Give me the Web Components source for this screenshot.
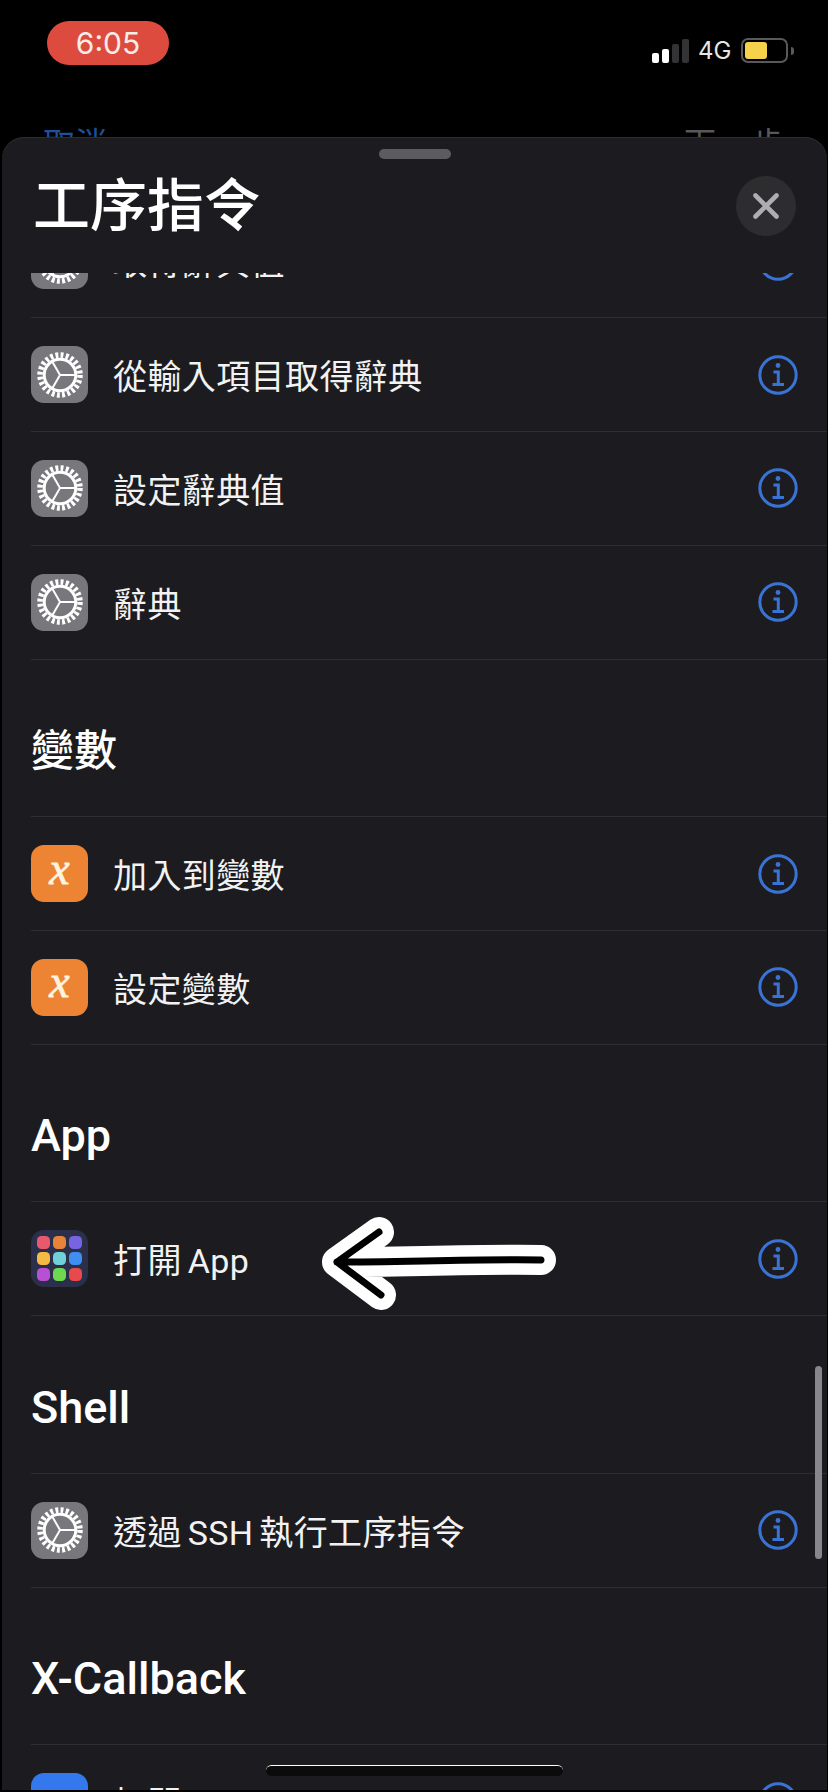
<!DOCTYPE html>
<html lang="zh-Hant">
<head>
<meta charset="utf-8">
<title>工序指令</title>
<style>
    html, body {
        margin: 0;
        height: 1792px;
        overflow: hidden;
        background: #000;
    }
    body {
        font-family: Inter, "Noto Sans CJK TC", sans-serif;
        color: #fff;
    }
</style>
</head>
<body>
<phone-screen>
    <status-bar time="6:05"></status-bar>
    <nav-behind></nav-behind>
    <action-sheet heading="工序指令">
        <action-row icon="gear">取得辭典值</action-row>
        <action-row icon="gear">從輸入項目取得辭典</action-row>
        <action-row icon="gear">設定辭典值</action-row>
        <action-row icon="gear">辭典</action-row>
        <section-title size="43">變數</section-title>
        <action-row icon="variable">加入到變數</action-row>
        <action-row icon="variable">設定變數</action-row>
        <section-title>App</section-title>
        <action-row icon="apps">打開 App</action-row>
        <section-title>Shell</section-title>
        <action-row icon="gear">透過 SSH 執行工序指令</action-row>
        <section-title>X-Callback</section-title>
        <action-row icon="link">打開 X-Callback URL</action-row>
    </action-sheet>
    <hand-arrow></hand-arrow>
    <home-bar></home-bar>
</phone-screen>

<script>
class PhoneScreen extends HTMLElement {
    constructor() {
        super();
        this.attachShadow({mode: "open"});
    }

    connectedCallback() {
        this.shadowRoot.innerHTML = `
            <style>
                :host {
                    display: block;
                    position: relative;
                    width: 828px;
                    height: 1792px;
                    overflow: hidden;
                    background: #000;
                }
            </style>
            <slot></slot>
        `;
    }
}
customElements.define('phone-screen', PhoneScreen);

class StatusBar extends HTMLElement {
    constructor() {
        super();
        this.attachShadow({mode: "open"});
    }

    connectedCallback() {
        let style = `
            :host {
                display: flex;
                justify-content: space-between;
                box-sizing: border-box;
                height: 95px;
                padding: 21px 34px 0 47px;
            }

            .time {
                width: 122px;
                height: 44px;
                border-radius: 22px;
                background: #dc4b3e;
                color: #f8ece8;
                font-size: 30px;
                line-height: 44px;
                text-align: center;
            }

            .right {
                display: flex;
                align-items: center;
                height: 25px;
                margin-top: 17px;
            }

            .bars {
                display: flex;
                align-items: flex-end;
                gap: 3px;
                height: 24px;
                margin-right: 9px;
            }

            .bars i {
                width: 7px;
                border-radius: 2px;
                background: #333335;
            }

            .bars i.on {
                background: #fff;
            }

            .net {
                width: 33px;
                margin-right: 10px;
                color: #e6e6e6;
                font-size: 24px;
                white-space: nowrap;
            }

            .battery {
                box-sizing: border-box;
                width: 47px;
                height: 25px;
                padding: 2px;
                border: 2px solid #59595b;
                border-radius: 7px;
            }

            .battery i {
                display: block;
                width: 22px;
                height: 17px;
                border-radius: 3px;
                background: #f6d24a;
            }

            .nub {
                width: 3px;
                height: 8px;
                margin-left: 3px;
                border-radius: 0 3px 3px 0;
                background: #59595b;
            }
        `;
        let html = `
            <div class="time">${this.getAttribute('time')}</div>
            <div class="right">
                <div class="bars">
                    <i class="on" style="height:10px"></i>
                    <i class="on" style="height:14px"></i>
                    <i style="height:19px"></i>
                    <i style="height:24px"></i>
                </div>
                <div class="net">4G</div>
                <div class="battery"><i></i></div>
                <div class="nub"></div>
            </div>
        `;
        this.shadowRoot.innerHTML = "<style>" + style + "</style>" + html;
    }
}
customElements.define('status-bar', StatusBar);

// the page under the sheet, only the top of its labels shows
class NavBehind extends HTMLElement {
    constructor() {
        super();
        this.attachShadow({mode: "open"});
    }

    connectedCallback() {
        this.shadowRoot.innerHTML = `
            <style>
                :host {
                    display: flex;
                    justify-content: space-between;
                    box-sizing: border-box;
                    height: 42px;
                    padding: 26px 42px 0 43px;
                    overflow: hidden;
                    font-family: "Noto Sans CJK TC", sans-serif;
                    font-size: 32px;
                    line-height: 40px;
                }

                .cancel {
                    color: #1f4f96;
                }

                .next {
                    color: #58585a;
                    letter-spacing: 2px;
                }
            </style>
            <span class="cancel">取消</span>
            <span class="next">下一步</span>
        `;
    }
}
customElements.define('nav-behind', NavBehind);

class ActionSheet extends HTMLElement {
    constructor() {
        super();
        this.attachShadow({mode: "open"});
    }

    connectedCallback() {
        let style = `
            :host {
                display: flex;
                flex-direction: column;
                box-sizing: border-box;
                width: 825px;
                height: 1653px;
                margin-left: 2px;
                overflow: hidden;
                border-radius: 22px 22px 0 0;
                background: #1c1c20;
                box-shadow: inset 0 1px 0 #2e2e30;
            }

            header {
                flex: none;
                display: flex;
                flex-direction: column;
                height: 136px;
            }

            .grabber {
                align-self: center;
                width: 72px;
                height: 10px;
                margin-top: 12px;
                border-radius: 5px;
                background: #5c5c60;
            }

            .title {
                display: flex;
                justify-content: space-between;
                align-items: center;
                padding: 17px 31px 0 31px;
            }

            h1 {
                margin: 0 0 10px;
                font-family: "Noto Sans CJK TC", sans-serif;
                font-size: 57px;
                font-weight: 500;
                line-height: 50px;
            }

            .close {
                display: flex;
                justify-content: center;
                align-items: center;
                width: 60px;
                height: 60px;
                border-radius: 50%;
                background: #2d2d30;
            }

            .list {
                flex: 1;
                overflow: hidden;
            }

            .content {
                display: flex;
                flex-direction: column;
                margin-top: -68.6px;
            }

            .scrollbar {
                position: absolute;
                left: 815px;
                top: 1366px;
                width: 7px;
                height: 193px;
                border-radius: 4px;
                background: #87878b;
            }
        `;
        let html = `
            <header>
                <div class="grabber"></div>
                <div class="title">
                    <h1>${this.getAttribute('heading')}</h1>
                    <div class="close">
                        <svg width="26" height="26" viewBox="0 0 26 26" fill="none" stroke="#aeaeb2" stroke-width="4.6" stroke-linecap="round"><path d="M2.5 2.5 23.5 23.5M23.5 2.5 2.5 23.5"/></svg>
                    </div>
                </div>
            </header>
            <div class="list"><div class="content"><slot></slot></div></div>
            <div class="scrollbar"></div>
        `;
        this.shadowRoot.innerHTML = "<style>" + style + "</style>" + html;
    }
}
customElements.define('action-sheet', ActionSheet);

class SectionTitle extends HTMLElement {
    constructor() {
        super();
        this.attachShadow({mode: "open"});
    }

    connectedCallback() {
        // CJK headings run a little smaller than the latin ones
        let size = this.getAttribute('size') || 45;
        this.shadowRoot.innerHTML = `
            <style>
                :host {
                    display: flex;
                    align-items: flex-end;
                    box-sizing: border-box;
                    height: 157.6px;
                    margin-left: 29px;
                    padding-bottom: 40px;
                    border-bottom: 1px solid #2e2e31;
                    font-family: Roboto, "Noto Sans CJK TC", sans-serif;
                    font-size: ${size}px;
                    font-weight: 500;
                    line-height: 50px;
                }
            </style>
            <slot></slot>
        `;
    }
}
customElements.define('section-title', SectionTitle);

// three spokes in a toothed ring, the teeth are a dashed circle
const GEAR_ICON = `
    <svg width="48" height="48" viewBox="0 0 48 48" fill="none" stroke="#fff">
        <circle cx="24" cy="24" r="20" stroke-width="5.5" stroke-dasharray="2.9 2.336"/>
        <circle cx="24" cy="24" r="15.8" stroke-width="3"/>
        <path stroke-width="2" d="M24 24H39M24 24 16.5 11M24 24 16.5 37"/>
    </svg>
`;

const APP_COLORS = ['#e8596e', '#e8843a', '#7764e2', '#f5ba44', '#70d1d9', '#3f8ff2', '#b750d2', '#6dd951', '#e9484c'];

class ActionRow extends HTMLElement {
    constructor() {
        super();
        this.attachShadow({mode: "open"});
    }

    iconMarkup(kind) {
        if (kind == 'gear') return GEAR_ICON;
        if (kind == 'variable') return '<span class="x">x</span>';
        if (kind == 'apps') {
            return '<div class="grid">' + APP_COLORS.map(c => `<i style="background:${c}"></i>`).join('') + '</div>';
        }
        return '';
    }

    connectedCallback() {
        let kind = this.getAttribute('icon');
        let style = `
            :host {
                display: flex;
                align-items: center;
                box-sizing: border-box;
                height: 113.8px;
                margin-left: 29px;
                border-bottom: 1px solid #2e2e31;
            }

            .icon {
                flex: none;
                display: flex;
                justify-content: center;
                align-items: center;
                width: 57px;
                height: 57px;
                border-radius: 13px;
            }

            .gear { background: #78787c; }
            .variable { background: #ec8433; }
            .apps { background: #2c2f49; }
            .link { background: #3478ee; }

            .x {
                color: #fdf3df;
                font-family: "Liberation Serif", serif;
                font-size: 46px;
                font-style: italic;
                line-height: 46px;
                margin-top: -10px;
                -webkit-text-stroke: 0.8px #fdf3df;
            }

            .grid {
                display: grid;
                grid-template-columns: repeat(3, 13px);
                grid-auto-rows: 13px;
                gap: 3.2px;
            }

            .grid i {
                border-radius: 4.5px;
            }

            .label {
                flex: 1;
                margin-left: 25px;
                font-family: Roboto, "Noto Sans CJK TC", sans-serif;
                font-size: 34px;
                letter-spacing: 0.4px;
                word-spacing: -3px;
                color: #f2f2f2;
                white-space: nowrap;
            }

            info-mark {
                margin-right: 29px;
            }
        `;
        let html = `
            <div class="icon ${kind}">${this.iconMarkup(kind)}</div>
            <div class="label"><slot></slot></div>
            <info-mark></info-mark>
        `;
        this.shadowRoot.innerHTML = "<style>" + style + "</style>" + html;
    }
}
customElements.define('action-row', ActionRow);

class InfoMark extends HTMLElement {
    constructor() {
        super();
        this.attachShadow({mode: "open"});
    }

    connectedCallback() {
        this.shadowRoot.innerHTML = `
            <style>
                :host {
                    display: block;
                    width: 40px;
                    height: 40px;
                }
            </style>
            <svg width="40" height="40" viewBox="0 0 40 40" fill="none" stroke="#3a73d6" stroke-width="3">
                <circle cx="20" cy="20" r="18.2"/>
                <circle cx="20" cy="10.5" r="2.4" fill="#3a73d6" stroke="none"/>
                <path d="M15.5 17H20.3V29M14.5 29.5H26"/>
            </svg>
        `;
    }
}
customElements.define('info-mark', InfoMark);

// hand drawn marker arrow lying over the rows
class HandArrow extends HTMLElement {
    constructor() {
        super();
        this.attachShadow({mode: "open"});
    }

    connectedCallback() {
        let line = "M541 1260C480 1259 400 1262 337 1262M379 1232 337 1262 381 1295";
        this.shadowRoot.innerHTML = `
            <style>
                :host {
                    position: absolute;
                    left: 0;
                    top: 0;
                }

                svg {
                    display: block;
                }
            </style>
            <svg width="828" height="1792" viewBox="0 0 828 1792" fill="none" stroke-linecap="round" stroke-linejoin="round">
                <path d="${line}" stroke="#fff" stroke-width="30"/>
                <path d="${line}" stroke="#000" stroke-width="7"/>
            </svg>
        `;
    }
}
customElements.define('hand-arrow', HandArrow);

class HomeBar extends HTMLElement {
    constructor() {
        super();
        this.attachShadow({mode: "open"});
    }

    connectedCallback() {
        this.shadowRoot.innerHTML = `
            <style>
                :host {
                    position: absolute;
                    left: 266px;
                    top: 1765px;
                    box-sizing: border-box;
                    width: 297px;
                    height: 11px;
                    border-top: 1px solid #fff;
                    border-radius: 6px;
                    background: #0b0b0c;
                }
            </style>
        `;
    }
}
customElements.define('home-bar', HomeBar);
</script>
</body>
</html>
